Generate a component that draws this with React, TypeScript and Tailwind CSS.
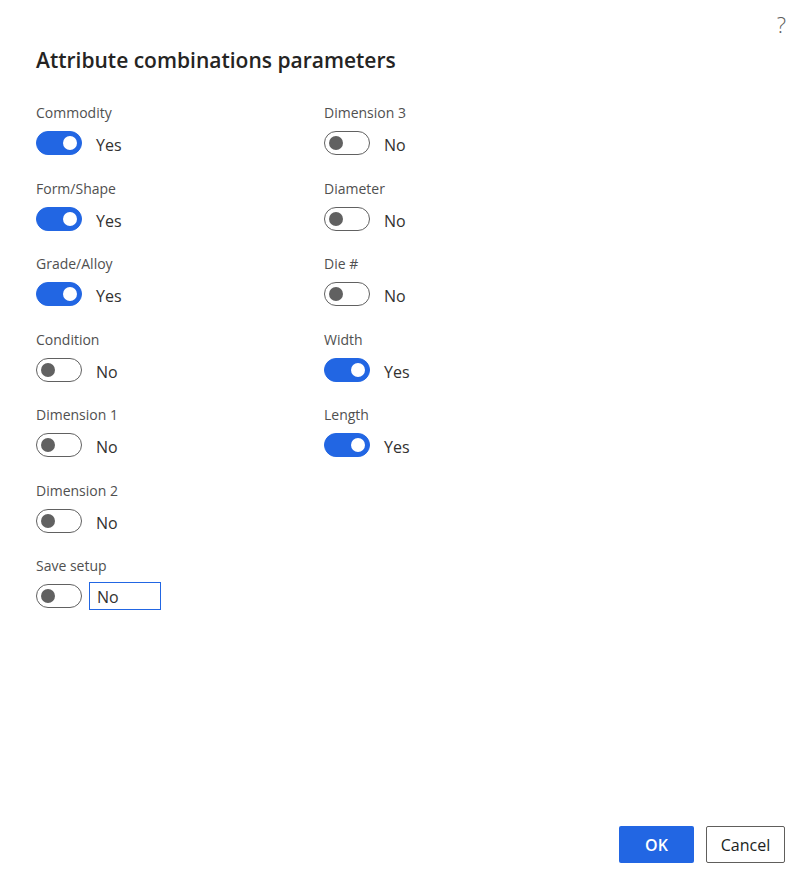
import React from 'react';

interface Field {
    label: string;
    on: boolean;
}

const leftFields: Field[] = [
    { label: 'Commodity', on: true },
    { label: 'Form/Shape', on: true },
    { label: 'Grade/Alloy', on: true },
    { label: 'Condition', on: false },
    { label: 'Dimension 1', on: false },
    { label: 'Dimension 2', on: false },
];

const rightFields: Field[] = [
    { label: 'Dimension 3', on: false },
    { label: 'Diameter', on: false },
    { label: 'Die #', on: false },
    { label: 'Width', on: true },
    { label: 'Length', on: true },
];

const Toggle: React.FC<{ on: boolean }> = ({ on }) => (
    <div
        className={
            on
                ? 'w-[46px] h-[24px] rounded-full bg-[#2266e3] border border-[#2266e3] flex items-center justify-end px-[4px] shrink-0'
                : 'w-[46px] h-[24px] rounded-full bg-white border border-[#616161] flex items-center justify-start px-[4px] shrink-0'
        }
    >
        <div className={on ? 'w-[14px] h-[14px] rounded-full bg-white' : 'w-[14px] h-[14px] rounded-full bg-[#616161]'} />
    </div>
);

// rows alternate 76/75 so the 75.5px pitch of the reference holds
const ToggleField: React.FC<{ field: Field; odd: boolean }> = ({ field, odd }) => (
    <div className={odd ? 'flex flex-col h-[75px]' : 'flex flex-col h-[76px]'}>
        <div className="text-[14px] leading-[20px] text-[#505050] h-[20px]">{field.label}</div>
        <div className="flex items-center mt-[8px] h-[24px]">
            <Toggle on={field.on} />
            <span className="ml-[14px] pt-[3px] text-[16px] leading-[24px] text-[#323130]">{field.on ? 'Yes' : 'No'}</span>
        </div>
    </div>
);

export default function App() {
    return (
        <div className="w-[793px] h-[871px] bg-white relative flex flex-col" style={{ fontFamily: '"Segoe UI", "Open Sans", "Noto Sans", sans-serif' }}>
            <div className="absolute right-[7px] top-[9px] text-[22px] leading-[30px] text-[#605e5c] font-light">?</div>
            <div className="px-[36px] pt-[45px]">
                <h1 className="text-[21px] leading-[30px] font-semibold text-[#252423]">Attribute combinations parameters</h1>
                <div className="flex mt-[28px]">
                    <div className="w-[288px] flex flex-col">
                        {leftFields.map((f, i) => (
                            <ToggleField key={f.label} field={f} odd={i % 2 === 1} />
                        ))}
                        <div className="flex flex-col">
                            <div className="text-[14px] leading-[20px] text-[#505050] h-[20px]">Save setup</div>
                            <div className="flex items-center mt-[8px] h-[24px]">
                                <Toggle on={false} />
                                <div className="ml-[7px] w-[72px] h-[28px] border border-[#2266e3] flex items-center pl-[7px] pt-[2px] text-[16px] text-[#323130]">No</div>
                            </div>
                        </div>
                    </div>
                    <div className="flex-1 flex flex-col">
                        {rightFields.map((f, i) => (
                            <ToggleField key={f.label} field={f} odd={i % 2 === 1} />
                        ))}
                    </div>
                </div>
            </div>
            <div className="mt-auto flex justify-end gap-[12px] pr-[8px] pb-[8px]">
                <button className="w-[75px] h-[37px] rounded-[2px] bg-[#2266e3] text-white text-[16px] font-semibold">OK</button>
                <button className="w-[79px] h-[37px] rounded-[2px] bg-white border border-[#605e5c] text-[#201f1e] text-[16px]">Cancel</button>
            </div>
        </div>
    );
}
